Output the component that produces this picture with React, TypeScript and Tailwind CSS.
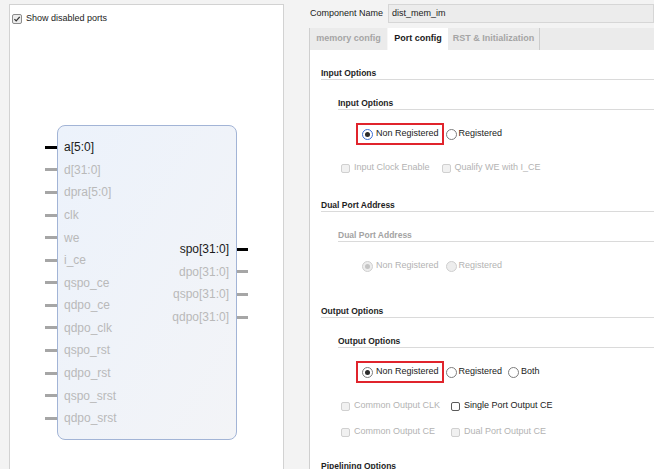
import React from 'react';

const leftPins = [
  { name: 'a[5:0]', on: true },
  { name: 'd[31:0]' },
  { name: 'dpra[5:0]' },
  { name: 'clk' },
  { name: 'we' },
  { name: 'i_ce' },
  { name: 'qspo_ce' },
  { name: 'qdpo_ce' },
  { name: 'qdpo_clk' },
  { name: 'qspo_rst' },
  { name: 'qdpo_rst' },
  { name: 'qspo_srst' },
  { name: 'qdpo_srst' },
];

const rightPins = [
  { name: 'spo[31:0]', on: true },
  { name: 'dpo[31:0]' },
  { name: 'qspo[31:0]' },
  { name: 'qdpo[31:0]' },
];

const Radio: React.FC<{ checked?: boolean; disabled?: boolean; blue?: boolean }> = ({ checked, disabled, blue }) => {
  const ring = disabled
    ? 'border-[#cfcfcf] bg-[#ededed]'
    : blue
      ? 'border-[#3b6fd6] bg-white'
      : 'border-[#7d7d7d] bg-white';
  return (
    <span className={`w-[11px] h-[11px] shrink-0 rounded-full border flex items-center justify-center ${ring}`}>
      {checked && <span className={disabled ? 'w-[5px] h-[5px] rounded-full bg-[#c4c4c4]' : 'w-[5px] h-[5px] rounded-full bg-[#2b2b2b]'} />}
    </span>
  );
};

const Check: React.FC<{ disabled?: boolean; label: string }> = ({ disabled, label }) => (
  <div className="flex items-center gap-[4px] h-[12px]">
    <span
      className={
        disabled
          ? 'w-[9px] h-[9px] rounded-[2px] border border-[#d0d0d0] bg-[#f1f1f1]'
          : 'w-[9px] h-[9px] rounded-[2px] border border-[#5a5a5a] bg-white'
      }
    />
    <span className={disabled ? 'text-[9px] text-[#b3b3b3]' : 'text-[9px] text-[#222]'}>{label}</span>
  </div>
);

const RadioRow: React.FC<{ boxed?: boolean; disabled?: boolean; blue?: boolean; both?: boolean; className: string }> = ({
  boxed,
  disabled,
  blue,
  both,
  className,
}) => {
  const txt = disabled ? 'text-[9px] text-[#b3b3b3]' : 'text-[9px] text-[#222]';
  return (
    <div className={`flex items-center h-[22px] ml-[46px] ${className}`}>
      <div
        className={
          boxed
            ? 'flex items-center h-[22px] border-2 border-[#e0242c] pl-[4px] pr-[3px] gap-[3px]'
            : 'flex items-center h-[22px] border-2 border-transparent pl-[4px] pr-[3px] gap-[3px]'
        }
      >
        <Radio checked disabled={disabled} blue={blue} />
        <span className={txt}>Non Registered</span>
      </div>
      <div className="flex items-center gap-[2px] ml-[2px]">
        <Radio disabled={disabled} />
        <span className={txt}>Registered</span>
      </div>
      {both && (
        <div className="flex items-center gap-[2px] ml-[6px]">
          <Radio />
          <span className={txt}>Both</span>
        </div>
      )}
    </div>
  );
};

export default function App() {
  return (
    <div className="w-[654px] h-[469px] overflow-hidden bg-[#f3f3f3] flex font-['Liberation_Sans',Arial,sans-serif]">
      {/* symbol panel */}
      <div className="ml-[9px] mt-[4px] w-[275px] h-[480px] shrink-0 border border-[#d2d2d2] bg-white">
        <div className="flex items-center gap-[4px] pl-[2px] pt-[6px] h-[16px] box-content">
          <span className="w-[10px] h-[10px] rounded-[2px] border border-[#8c8c8c] bg-[#ececec] flex items-center justify-center">
            <svg viewBox="0 0 10 10" className="w-[8px] h-[8px]">
              <path d="M1.8 5.2 L4 7.4 L8.4 2.4" fill="none" stroke="#333" strokeWidth="1.6" />
            </svg>
          </span>
          <span className="text-[9px] text-[#222]">Show disabled ports</span>
        </div>

        <div className="flex ml-[35px] mt-[98px]">
          <div className="w-[12px] pt-[11px] flex flex-col">
            {leftPins.map((p) => (
              <div key={p.name} className="h-[22.58px] flex items-center">
                <span className={p.on ? 'w-[12px] h-[3px] bg-black' : 'w-[12px] h-[3px] bg-[#a6a6a6]'} />
              </div>
            ))}
          </div>
          <div className="w-[180px] h-[315px] rounded-[8px] border border-[#a2b4d6] bg-gradient-to-br from-[#ecf2fb] to-[#f3f4f7] flex justify-between">
            <div className="pt-[10px] pl-[6px] flex flex-col">
              {leftPins.map((p) => (
                <div
                  key={p.name}
                  className={
                    p.on
                      ? 'h-[22.58px] flex items-center text-[12px] text-[#1a1a1a]'
                      : 'h-[22.58px] flex items-center text-[12px] text-[#b9b9b9]'
                  }
                >
                  {p.name}
                </div>
              ))}
            </div>
            <div className="pt-[112px] pr-[7px] flex flex-col items-end">
              {rightPins.map((p) => (
                <div
                  key={p.name}
                  className={
                    p.on
                      ? 'h-[22.58px] flex items-center text-[12px] text-[#1a1a1a]'
                      : 'h-[22.58px] flex items-center text-[12px] text-[#b9b9b9]'
                  }
                >
                  {p.name}
                </div>
              ))}
            </div>
          </div>
          <div className="w-[11px] pt-[113px] flex flex-col">
            {rightPins.map((p) => (
              <div key={p.name} className="h-[22.58px] flex items-center">
                <span className={p.on ? 'w-[11px] h-[3px] bg-black' : 'w-[11px] h-[3px] bg-[#a6a6a6]'} />
              </div>
            ))}
          </div>
        </div>
      </div>

      {/* config side */}
      <div className="ml-[25px] flex-1 flex flex-col min-w-0">
        <div className="flex items-center mt-[4px] h-[19px] shrink-0">
          <span className="w-[79px] pl-[1px] text-[9px] text-[#222]">Component Name</span>
          <div className="flex-1 h-[19px] bg-[#ececec] border border-[#d6d6d6] flex items-center pl-[3px] text-[9px] text-[#222]">
            dist_mem_im
          </div>
        </div>

        <div className="mt-[5px] h-[22px] shrink-0 flex bg-[#ebebeb] border-l border-[#cfcfcf]">
          <div className="w-[78px] flex items-center justify-center text-[9px] font-semibold text-[#a5a5a5] border-r border-[#f7f7f7]">
            memory config
          </div>
          <div className="w-[60px] flex items-center justify-center text-[9px] font-bold text-[#1a1a1a] bg-white">
            Port config
          </div>
          <div className="w-[92px] flex items-center justify-center text-[9px] font-semibold text-[#a5a5a5] border-r border-[#cdcdcd]">
            RST &amp; Initialization
          </div>
        </div>

        <div className="flex-1 bg-white border-l border-[#cfcfcf] flex flex-col">
          <div className="ml-[11px] mt-[17px] h-[13px] shrink-0 border-b border-[#dadada] text-[8.5px] font-bold leading-[12px] text-[#1e1e1e]">
            Input Options
          </div>
          <div className="ml-[28px] mt-[17px] h-[13px] shrink-0 border-b border-[#dadada] text-[8.5px] font-bold leading-[12px] text-[#1e1e1e]">
            Input Options
          </div>
          <RadioRow boxed blue className="mt-[13px] shrink-0" />
          <div className="ml-[31px] mt-[17px] flex gap-[12px] shrink-0">
            <Check disabled label="Input Clock Enable" />
            <Check disabled label="Qualify WE with I_CE" />
          </div>

          <div className="ml-[11px] mt-[25px] h-[13px] shrink-0 border-b border-[#dadada] text-[8.5px] font-bold leading-[12px] text-[#1e1e1e]">
            Dual Port Address
          </div>
          <div className="ml-[28px] mt-[17px] h-[13px] shrink-0 border-b border-[#dadada] text-[8.5px] font-bold leading-[12px] text-[#a3a3a3]">
            Dual Port Address
          </div>
          <RadioRow disabled className="mt-[13px] shrink-0" />

          <div className="ml-[11px] mt-[28px] h-[13px] shrink-0 border-b border-[#dadada] text-[8.5px] font-bold leading-[12px] text-[#1e1e1e]">
            Output Options
          </div>
          <div className="ml-[28px] mt-[17px] h-[13px] shrink-0 border-b border-[#dadada] text-[8.5px] font-bold leading-[12px] text-[#1e1e1e]">
            Output Options
          </div>
          <RadioRow boxed both className="mt-[13px] shrink-0" />
          <div className="ml-[31px] mt-[17px] grid grid-cols-[110px_auto] gap-y-[14px] shrink-0">
            <Check disabled label="Common Output CLK" />
            <Check label="Single Port Output CE" />
            <Check disabled label="Common Output CE" />
            <Check disabled label="Dual Port Output CE" />
          </div>

          <div className="ml-[11px] mt-[22px] h-[13px] shrink-0 border-b border-[#dadada] text-[8.5px] font-bold leading-[12px] text-[#1e1e1e]">
            Pipelining Options
          </div>
        </div>
      </div>
    </div>
  );
}
